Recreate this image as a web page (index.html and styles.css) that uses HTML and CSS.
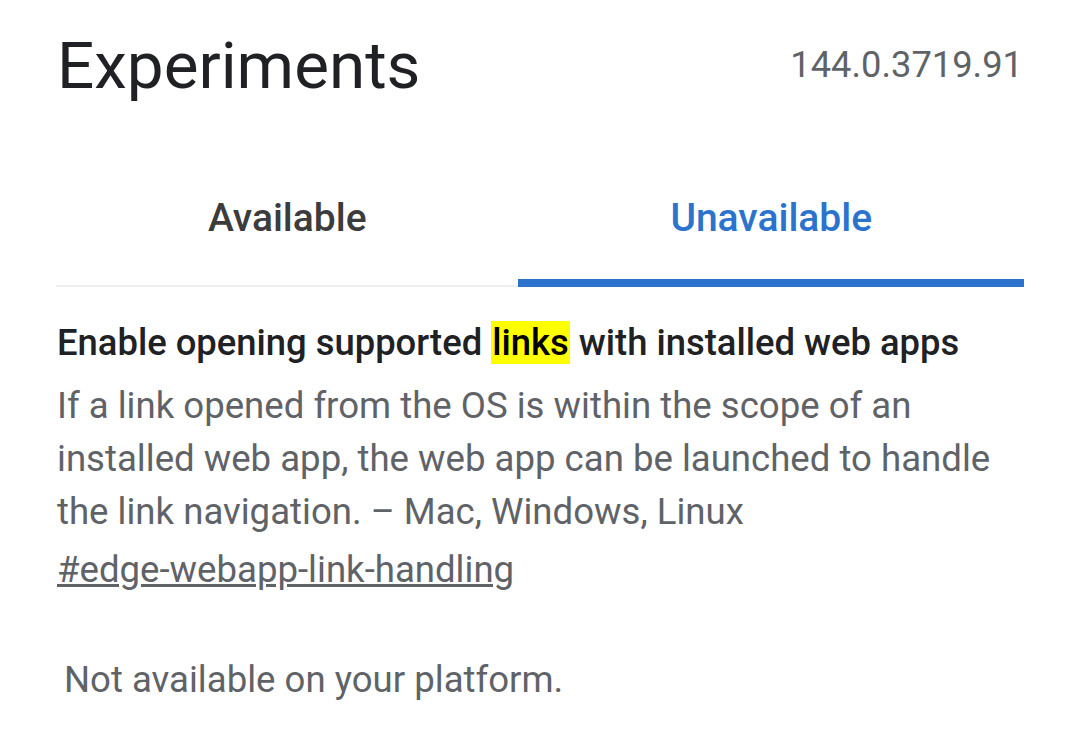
FILE: index.html
```html
<!DOCTYPE html>
<html lang="en">
<head>
<meta charset="utf-8">
<title>Experiments</title>
<link rel="stylesheet" href="styles.css">
</head>
<body>
<div class="page">
  <header class="top">
    <h1 class="title">Experiments</h1>
    <span class="version">144.0.3719.91</span>
  </header>
  <nav class="tabs">
    <div class="tab">Available</div>
    <div class="tab active">Unavailable</div>
  </nav>
  <section class="experiment">
    <h2 class="exp-name">Enable opening supported <mark class="hl">links</mark> with installed web apps</h2>
    <p class="exp-desc">If a link opened from the OS is within the scope of an installed web app, the web app can be launched to handle the link navigation. – Mac, Windows, Linux</p>
    <a class="exp-link" href="#edge-webapp-link-handling">#edge-webapp-link-handling</a>
    <p class="exp-status">Not available on your platform.</p>
  </section>
</div>
</body>
</html>
```
FILE: styles.css
```css
html, body {
  margin: 0;
  padding: 0;
  background: #ffffff;
}
body {
  font-family: Roboto, "Noto Sans", Arial, sans-serif;
  color: #202124;
}
.page {
  padding: 0 56px 0 57px;
}
.top {
  display: flex;
  justify-content: space-between;
  align-items: baseline;
  padding-top: 25px;
}
.title {
  margin: 0;
  font-size: 65.6px;
  font-weight: 400;
  line-height: 82px;
  color: #202124;
}
.version {
  font-size: 36.3px;
  color: #5f6368;
  margin-right: 1px;
  position: relative;
  top: -11px;
}
.tabs {
  display: flex;
  margin-top: 88px;
  margin-left: -1px;
  border-bottom: 2px solid #eeeeee;
}
.tab {
  flex: 1 1 auto;
  text-align: center;
  font-size: 39px;
  font-weight: 500;
  color: #3c3c3c;
  line-height: 46px;
  padding-bottom: 38px;
  margin-bottom: -2px;
  border-bottom: 8px solid transparent;
}
.tab.active {
  color: #2b73cc;
  border-bottom-color: #2b73cc;
  border-radius: 4px 4px 0 0;
}
.experiment {
  padding-top: 32px;
}
.exp-name {
  margin: 0;
  font-size: 36.4px;
  font-weight: 500;
  line-height: 48px;
  color: #202124;
}
.hl {
  background: #ffff00;
  color: #000000;
  padding: 0 1px;
}
.exp-desc {
  margin: 12px 0 0;
  font-size: 36.6px;
  line-height: 53px;
  color: #5f6368;
}
.exp-link {
  display: block;
  width: max-content;
  margin-top: 8px;
  font-size: 36.6px;
  line-height: 48px;
  color: #5f6368;
  text-decoration: underline;
}
.exp-status {
  margin: 62px 0 0 7px;
  font-size: 36.6px;
  line-height: 48px;
  color: #5f6368;
}
```
